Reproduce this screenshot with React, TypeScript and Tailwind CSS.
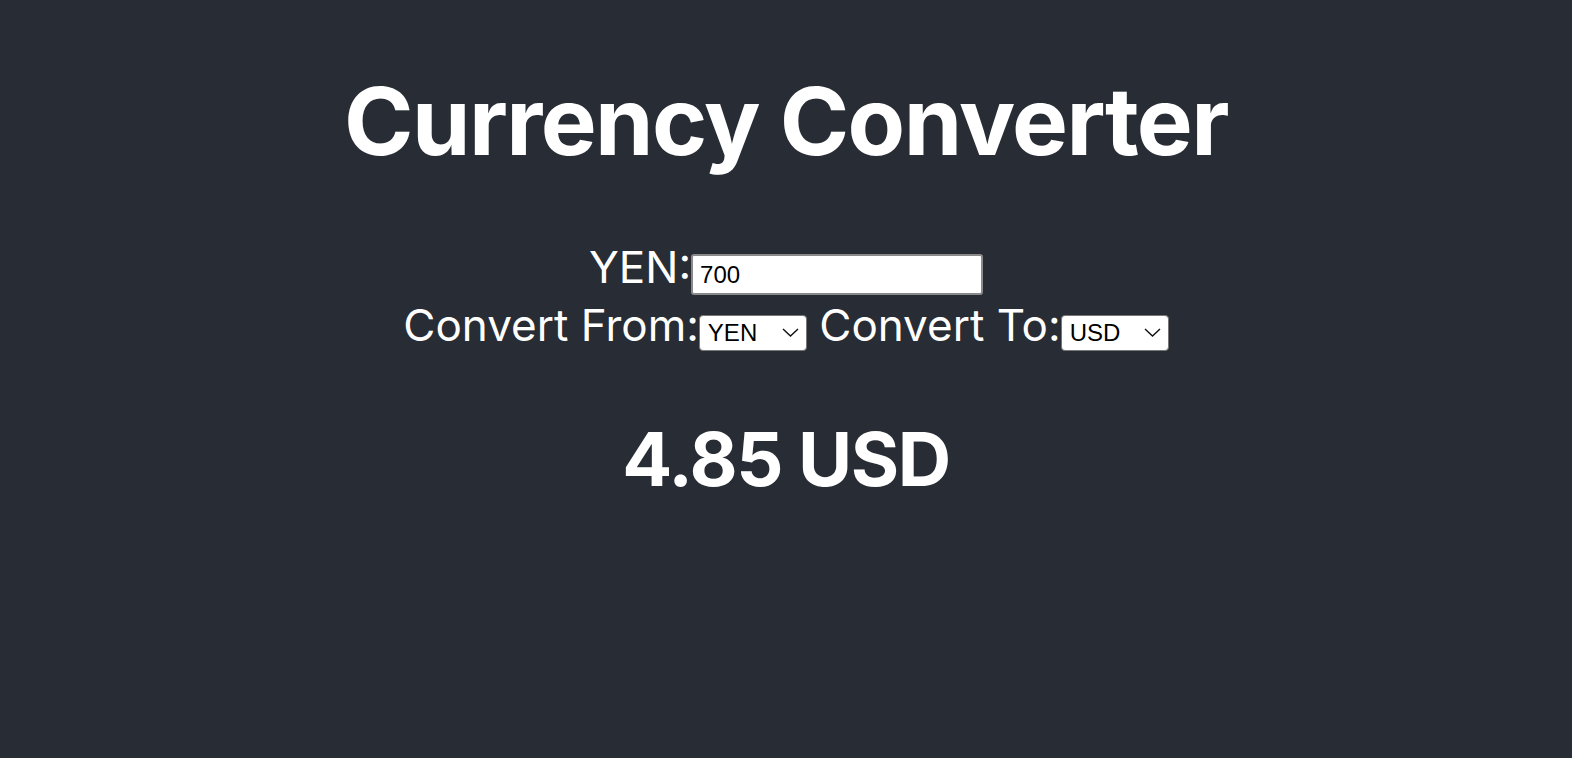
import { useState } from "react";

const rates: Record<string, number> = { YEN: 1, USD: 0.006929 };

const Picker = ({
  value,
  onChange,
  options,
}: {
  value: string;
  onChange: (v: string) => void;
  options: string[];
}) => (
  <span className="inline-grid">
    <select
      value={value}
      onChange={(e) => onChange(e.target.value)}
      className="col-start-1 row-start-1 appearance-none w-[108px] h-[36px] pl-[8px] pr-[28px] bg-white text-black text-[24px] leading-[34px] border border-[#767676] rounded-[4px] font-['Liberation_Sans',sans-serif]"
    >
      {options.map((o) => (
        <option key={o}>{o}</option>
      ))}
    </select>
    {/* chevron */}
    <svg
      className="col-start-1 row-start-1 self-center justify-self-end mr-[8px] pointer-events-none"
      width="17"
      height="9"
      viewBox="0 0 17 9"
      fill="none"
    >
      <path d="M1 1l7.5 7L16 1" stroke="#111" strokeWidth="1.4" />
    </svg>
  </span>
);

export default function App() {
  const [amount, setAmount] = useState("700");
  const [from, setFrom] = useState("YEN");
  const [to, setTo] = useState("USD");

  const result = ((Number(amount) / rates[from]) * rates[to]).toFixed(2);

  return (
    <div className="min-h-screen bg-[#282c34] text-white text-center font-['Inter',sans-serif]">
      <h1 className="pt-[65px] text-[94px] font-bold leading-[1.2] tracking-[-0.017em]">
        Currency Converter
      </h1>
      <div className="mt-[60px] text-[44px] leading-[58px]">
        <div>
          <label>
            {from}:
            <input
              type="text"
              value={amount}
              onChange={(e) => setAmount(e.target.value)}
              className="w-[292px] h-[41px] bg-white text-black text-[24px] px-[7px] border-2 border-[#8a8a8a] rounded-[3px] font-['Liberation_Sans',sans-serif]"
            />
          </label>
        </div>
        <div>
          <label>
            Convert From:
            <Picker value={from} onChange={setFrom} options={["YEN", "USD"]} />
          </label>{" "}
          <label>
            Convert To:
            <Picker value={to} onChange={setTo} options={["USD", "YEN"]} />
          </label>
        </div>
      </div>
      <h2 className="mt-[61px] text-[74px] font-bold leading-[1.2] tracking-[-0.02em]">
        {result} {to}
      </h2>
    </div>
  );
}
